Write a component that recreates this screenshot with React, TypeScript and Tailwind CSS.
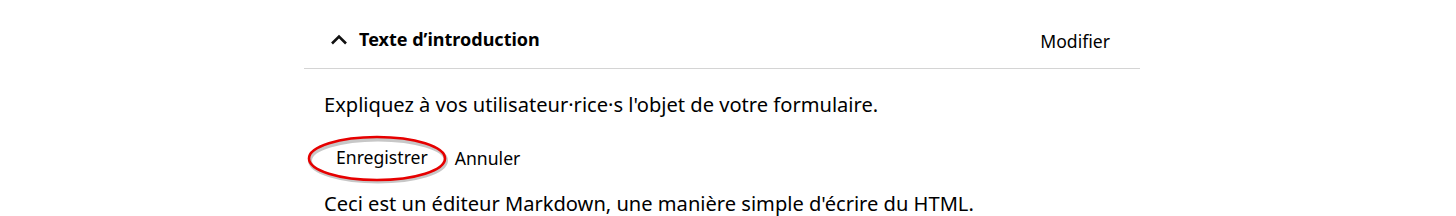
export default function App() {
  return (
    <div className="h-[216px] w-[1456px] overflow-hidden bg-white text-black" style={{ fontFamily: '"Noto Sans", sans-serif' }}>
      <div className="ml-[304px] w-[836px]">
        <div className="flex h-[69px] items-center justify-between border-b border-[#d4d4d4] pt-[10px] pl-[26px] pr-[30px]">
          <button className="flex items-center gap-[11px]">
            <svg width="18" height="12" viewBox="0 0 18 12" fill="none">
              <path d="M2 10.5 L9 3.5 L16 10.5" stroke="#111" strokeWidth="2.6" />
            </svg>
            <span className="text-[18px] font-bold leading-[24px]">Texte d’introduction</span>
          </button>
          <button className="mt-[3px] text-[17.6px] leading-[24px]">Modifier</button>
        </div>
        <div className="px-[20px] pt-[22px]">
          <p className="text-[20.1px] leading-[28px]">Expliquez à vos utilisateur·rice·s l'objet de votre formulaire.</p>
          <div className="mt-[26px] flex items-center">
            <div className="relative">
              <button className="px-[12px] text-[17.6px] leading-[24px]">Enregistrer</button>
              <svg className="pointer-events-none absolute left-[-24px] top-[-14px]" width="156" height="60" viewBox="0 0 156 60" fill="none">
                <ellipse cx="78" cy="29.5" rx="68" ry="21" stroke="rgba(0,0,0,0.22)" strokeWidth="4" />
                <ellipse cx="77" cy="27.5" rx="68" ry="21.5" stroke="#e60000" strokeWidth="2.6" />
              </svg>
            </div>
            <button className="ml-[15px] text-[17.6px] leading-[24px]">Annuler</button>
          </div>
          <p className="mt-[20px] text-[20.1px] leading-[28px]">Ceci est un éditeur Markdown, une manière simple d'écrire du HTML.</p>
        </div>
      </div>
    </div>
  );
}
